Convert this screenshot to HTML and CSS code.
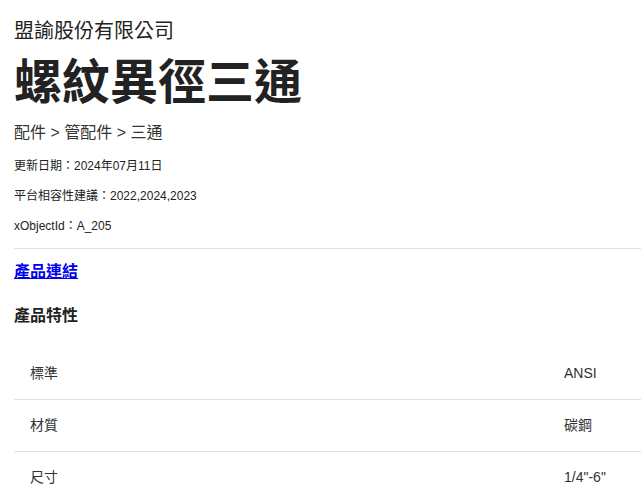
FILE: index.html
```html
<!DOCTYPE html>
<html lang="zh-Hant">
<head>
<meta charset="utf-8">
<title>螺紋異徑三通</title>
<link rel="stylesheet" href="styles.css">
</head>
<body>
<main class="page">
  <div class="company">盟諭股份有限公司</div>
  <h1 class="title">螺紋異徑三通</h1>
  <div class="crumbs">配件 &gt; 管配件 &gt; 三通</div>
  <p class="meta">更新日期：2024年07月11日</p>
  <p class="meta">平台相容性建議：2022,2024,2023</p>
  <p class="meta">xObjectId：A_205</p>
  <hr class="rule">
  <a class="link" href="#">產品連結</a>
  <h2 class="section">產品特性</h2>
  <div class="specs">
    <div class="row"><span class="key">標準</span><span class="val">ANSI</span></div>
    <div class="row"><span class="key">材質</span><span class="val">碳鋼</span></div>
    <div class="row"><span class="key">尺寸</span><span class="val">1/4"-6"</span></div>
  </div>
</main>
</body>
</html>
```

FILE: styles.css
```css
html, body {
  margin: 0;
  padding: 0;
  background: #fff;
  overflow: hidden;
}
body {
  font-family: "Liberation Sans", "Noto Sans CJK TC", sans-serif;
  color: #222;
}
.page {
  padding: 0 0 0 14px;
  display: flex;
  flex-direction: column;
  align-items: flex-start;
}
.company {
  font-size: 20px;
  line-height: 24px;
  margin-top: 19px;
}
.title {
  font-size: 48px;
  font-weight: 700;
  line-height: 56px;
  margin: 12px 0 0;
}
.crumbs {
  font-size: 16px;
  line-height: 20px;
  margin-top: 12px;
  color: #333;
}
.meta {
  font-size: 12px;
  line-height: 16px;
  margin: 14px 0 0;
}
.crumbs + .meta { margin-top: 15px; }
.rule {
  align-self: stretch;
  border: 0;
  border-top: 1px solid #e0e0e0;
  height: 0;
  margin: 14px 0 0;
}
.link {
  font-size: 16px;
  font-weight: 700;
  line-height: 20px;
  margin-top: 13px;
  color: #0000ee;
  text-decoration: underline;
}
.section {
  font-size: 16px;
  font-weight: 700;
  line-height: 20px;
  margin: 24px 0 0;
}
.specs {
  align-self: stretch;
  margin-top: 22px;
  display: flex;
  flex-direction: column;
}
.row {
  display: grid;
  grid-template-columns: 1fr 93px;
  border-bottom: 1px solid #e0e0e0;
  font-size: 14px;
  line-height: 19px;
  color: #333;
}
.key, .val {
  padding: 16px;
}
```
